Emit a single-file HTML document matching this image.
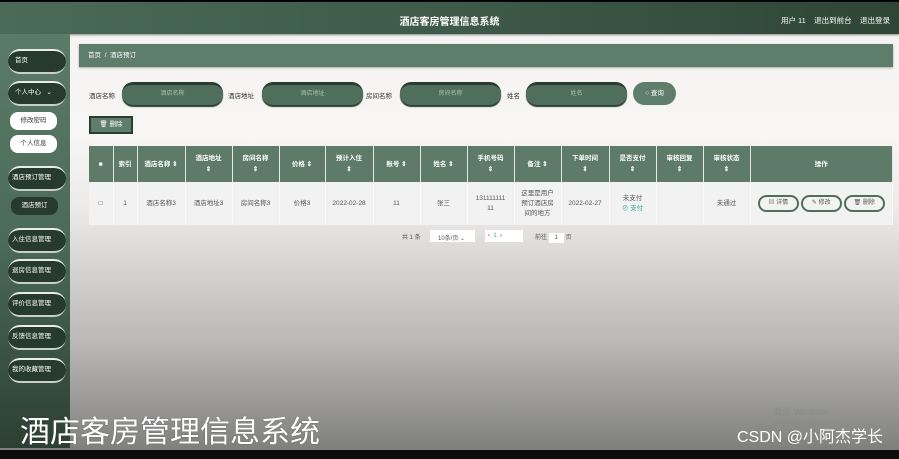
<!DOCTYPE html><html><head><meta charset="utf-8"><style>
*{margin:0;padding:0;box-sizing:border-box}
body{width:899px;height:459px;overflow:hidden;position:relative;font-family:"Liberation Sans","Noto Sans CJK SC",sans-serif;font-size:7px;color:#333;background:linear-gradient(180deg,#f4f3f1 0%,#f7f6f4 30%,#ecebea 45%,#b9b8b6 75%,#7a7a79 100%)}
.top{position:absolute;left:0;top:0;width:899px;height:2px;background:#000}
.hdr{position:absolute;left:0;top:2px;width:899px;height:32px;background:linear-gradient(90deg,#4b6a57,#3e5a49 50%,#2f4536);box-shadow:0 1px 2px #888}
.hdr .t{position:absolute;left:0;right:0;top:11px;text-align:center;color:#fff;font-size:10px;font-weight:bold}
.hdr .r{position:absolute;right:9px;top:13px;color:#fff;font-size:7.5px}
.side{position:absolute;left:0;top:34px;width:70px;height:414px;background:linear-gradient(180deg,#5b7b69,#4b6a58 50%,#2d3f33)}
.sb{position:absolute;left:8px;width:58px;height:25px;border-radius:12px;background:#263a2d;color:#fff;font-size:6.5px;line-height:20px;padding-left:7px;border-top:2px solid #e9ece8;border-bottom:2px solid #c9d0c9;white-space:nowrap;overflow:hidden}
.sw{position:absolute;left:10px;width:47px;height:18px;border-radius:8px;background:#fff;color:#333;font-size:6.5px;text-align:center;line-height:18px}
.bc{position:absolute;left:79px;top:44px;width:814px;height:23px;background:#5f7d6b;color:#fff;font-size:6.5px;line-height:23px;padding-left:9px;box-shadow:0 1px 2px #aaa}
.lb{position:absolute;top:90px;font-size:6.5px;color:#333}
.in{position:absolute;top:82px;width:101px;height:23px;border-radius:11px;background:#4f6f5c;border-top:3px solid #2b3d31;color:#aac0b2;font-size:6px;text-align:center;line-height:18px;box-shadow:0 2px 1px #2b3d31}
.q{position:absolute;left:633px;top:82px;width:43px;height:23px;border-radius:12px;background:#5f7d6b;color:#fff;font-size:6.5px;text-align:center;line-height:23px}
.del{position:absolute;left:89px;top:116px;width:44px;height:18px;background:#5f7d6b;border:2px solid #2b3d31;color:#fff;font-size:6.5px;text-align:center;line-height:14px}
table{position:absolute;left:89px;top:146px;width:804px;border-collapse:collapse;table-layout:fixed}
th{height:36px;background:#5d7b68;color:#fff;font-size:6.5px;font-weight:bold;border-right:1px solid #e2e8e3;text-align:center;line-height:11px}
td{height:43px;background:#f2f2f2;color:#555;font-size:6.5px;text-align:center;line-height:10px;border-right:1px solid #fafafa}
.ob{display:inline-block;width:41px;height:17px;border:2px solid #4f6f5c;border-radius:9px;line-height:13px;margin:0 1px;color:#555;font-size:6px}
.pg{position:absolute;top:232px;font-size:6px;color:#555}
.cap{position:absolute;left:20px;top:417px;color:#fff;font-size:30px;line-height:32px;text-shadow:0 0 1px #444}
.cs{position:absolute;right:16px;top:428px;color:#fff;font-size:16px;line-height:20px}
.win{position:absolute;left:773px;top:405px;color:#8a8a8a;font-size:9px}
.bot{position:absolute;left:0;top:450px;width:899px;height:9px;background:#0c0c0c}
</style></head><body>
<div class="top"></div>
<div class="hdr"><div class="t">酒店客房管理信息系统</div><div class="r">用户 11 &nbsp;&nbsp; 退出到前台 &nbsp;&nbsp; 退出登录</div></div>
<div class="side"></div>
<div class="sb" style="top:49px">首页</div>
<div class="sb" style="top:81px">个人中心 &nbsp;&nbsp;⌄</div>
<div class="sw" style="top:112px">修改密码</div>
<div class="sw" style="top:135px">个人信息</div>
<div class="sb" style="top:166px;padding-left:4px">酒店预订管理</div>
<div class="sw" style="top:197px;left:11px;background:#263a2d;color:#fff">酒店预订</div>
<div class="sb" style="top:228px;padding-left:4px">入住信息管理</div>
<div class="sb" style="top:259px;padding-left:4px">退房信息管理</div>
<div class="sb" style="top:292px;padding-left:4px">评价信息管理</div>
<div class="sb" style="top:325px;padding-left:4px">反馈信息管理</div>
<div class="sb" style="top:358px;padding-left:4px">我的收藏管理</div>
<div class="bc">首页 &nbsp;/ &nbsp;酒店预订</div>
<div class="lb" style="left:89px">酒店名称</div><div class="in" style="left:122px">酒店名称</div>
<div class="lb" style="left:228px">酒店地址</div><div class="in" style="left:262px">酒店地址</div>
<div class="lb" style="left:366px">房间名称</div><div class="in" style="left:400px">房间名称</div>
<div class="lb" style="left:507px">姓名</div><div class="in" style="left:526px">姓名</div>
<div class="q">○ 查询</div>
<div class="del">🗑 删除</div>
<table><colgroup><col style="width:24px"><col style="width:24px"><col style="width:48px"><col style="width:47px"><col style="width:47px"><col style="width:46px"><col style="width:48px"><col style="width:47px"><col style="width:47px"><col style="width:47px"><col style="width:47px"><col style="width:48px"><col style="width:47px"><col style="width:47px"><col style="width:47px"><col></colgroup>
<tr><th>■</th><th>索引</th><th>酒店名称 ⇕</th><th>酒店地址<br>⇕</th><th>房间名称<br>⇕</th><th>价格 ⇕</th><th>预计入住<br>⇕</th><th>账号 ⇕</th><th>姓名 ⇕</th><th>手机号码<br>⇕</th><th>备注 ⇕</th><th>下单时间<br>⇕</th><th>是否支付<br>⇕</th><th>审核回复<br>⇕</th><th>审核状态<br>⇕</th><th>操作</th></tr>
<tr><td>□</td><td>1</td><td>酒店名称3</td><td>酒店地址3</td><td>房间名称3</td><td>价格3</td><td>2022-02-28</td><td>11</td><td>张三</td><td>131111111<br>11</td><td>这里是用户<br>预订酒店房<br>间的地方</td><td>2022-02-27</td><td>未支付<br><span style="color:#3a9">⊘ 支付</span></td><td></td><td>未通过</td><td><span class="ob">▤ 详情</span><span class="ob">✎ 修改</span><span class="ob">🗑 删除</span></td></tr>
</table>
<div class="pg" style="left:402px">共 1 条</div>
<div class="pg" style="left:430px;top:230px;width:45px;height:12px;background:#fff;padding:3px 0 0 8px">10条/页 ⌄</div>
<div class="pg" style="left:485px;top:230px;width:38px;height:12px;background:#fff;padding:3px 0 0 3px">‹ &nbsp;<span style="color:#3a9">1</span>&nbsp; ›</div>
<div class="pg" style="left:535px">前往 <span style="background:#fff;padding:2px 6px">1</span> 页</div>
<div class="win">激活 Windows<br><span style="font-size:6px">转到"设置"以激活 Windows。</span></div>
<div class="cap">酒店客房管理信息系统</div>
<div class="cs">CSDN @小阿杰学长</div>
<div class="bot"></div>
</body></html>
